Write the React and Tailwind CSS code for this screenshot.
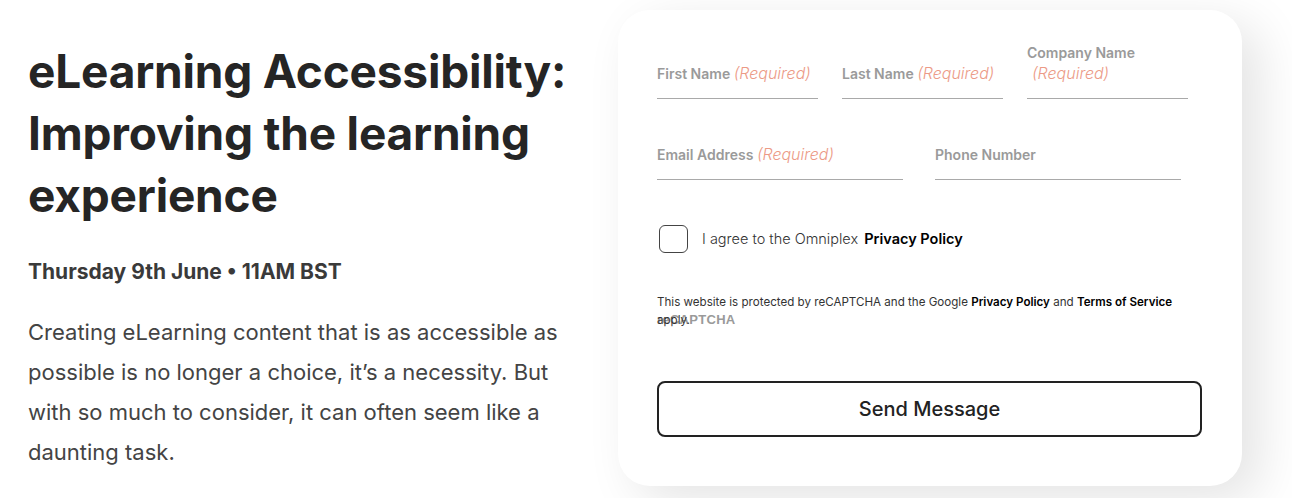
import React from 'react'

const Field = ({ label, required, width, wrap }) => (
   <div className={`flex flex-col ${width}`}>
      <div className="h-[58px] flex items-end pb-[14px]">
         <p className="text-[14px] leading-[21px] font-semibold text-[#9a9a9a]">
            {label}
            {wrap ? <br /> : ' '}
            {required && <span className={`italic font-light text-[#ec9a86] text-[16px] ${wrap ? 'ml-[5px]' : ''}`}>(Required)</span>}
         </p>
      </div>
      <div className="h-px bg-[#a9a9a9]" />
   </div>
)

export default function App() {
   return (
      <div className="w-[1292px] h-[498px] bg-white flex overflow-hidden font-['Inter',sans-serif]">
         <section className="w-[618px] pl-[28px] pt-[40px] pr-[30px]">
            <h1 className="text-[46px] leading-[62px] font-bold text-[#252525] tracking-[-0.2px]">
               eLearning Accessibility: Improving the learning experience
            </h1>
            <p className="mt-[30px] text-[21px] font-bold text-[#3a3a3a]">
               Thursday 9th June • 11AM BST
            </p>
            <p className="mt-[24px] text-[22px] leading-[40px] text-[#444] w-[545px]">
               Creating eLearning content that is as accessible as possible is no longer a choice, it’s a necessity. But with so much to consider, it can often seem like a daunting task.
            </p>
         </section>

         <div className="pt-[10px]">
            <form className="w-[624px] h-[476px] bg-white rounded-[32px] shadow-[18px_14px_50px_rgba(0,0,0,0.11)] px-[39px] pt-[30px]">
               <div className="flex gap-[24px]">
                  <Field label="First Name" required width="w-[161px]" />
                  <Field label="Last Name" required width="w-[161px]" />
                  <Field label="Company Name" required wrap width="w-[161px]" />
               </div>
               <div className="flex gap-[32px] mt-[22px]">
                  <Field label="Email Address" required width="w-[246px]" />
                  <Field label="Phone Number" width="w-[246px]" />
               </div>

               <label className="flex items-center mt-[45px] ml-[2px]">
                  <span className="w-[29px] h-[28px] rounded-[6px] border border-[#444] bg-white" />
                  <span className="ml-[14px] text-[14.5px] font-light text-[#333]">
                     I agree to the Omniplex <b className="ml-[2px] font-semibold text-black">Privacy Policy</b>
                  </span>
               </label>

               <div className="relative mt-[40px] text-[11.6px] leading-[18px] text-[#333] w-[530px]">
                  <span className="absolute left-0 top-[18px] font-['Liberation_Sans',sans-serif] font-bold text-[13px] text-[#9a9a9a] tracking-[0.3px]">
                     reCAPTCHA
                  </span>
                  <p className="relative">
                     This website is protected by reCAPTCHA and the Google{' '}
                     <b className="font-semibold text-black">Privacy Policy</b> and{' '}
                     <b className="font-semibold text-black">Terms of Service</b> apply.
                  </p>
               </div>

               <button
                  type="button"
                  className="mt-[52px] w-[545px] h-[56px] rounded-[8px] border-2 border-[#222] text-[20px] font-medium text-[#222]"
               >
                  Send Message
               </button>
            </form>
         </div>
      </div>
   )
}
